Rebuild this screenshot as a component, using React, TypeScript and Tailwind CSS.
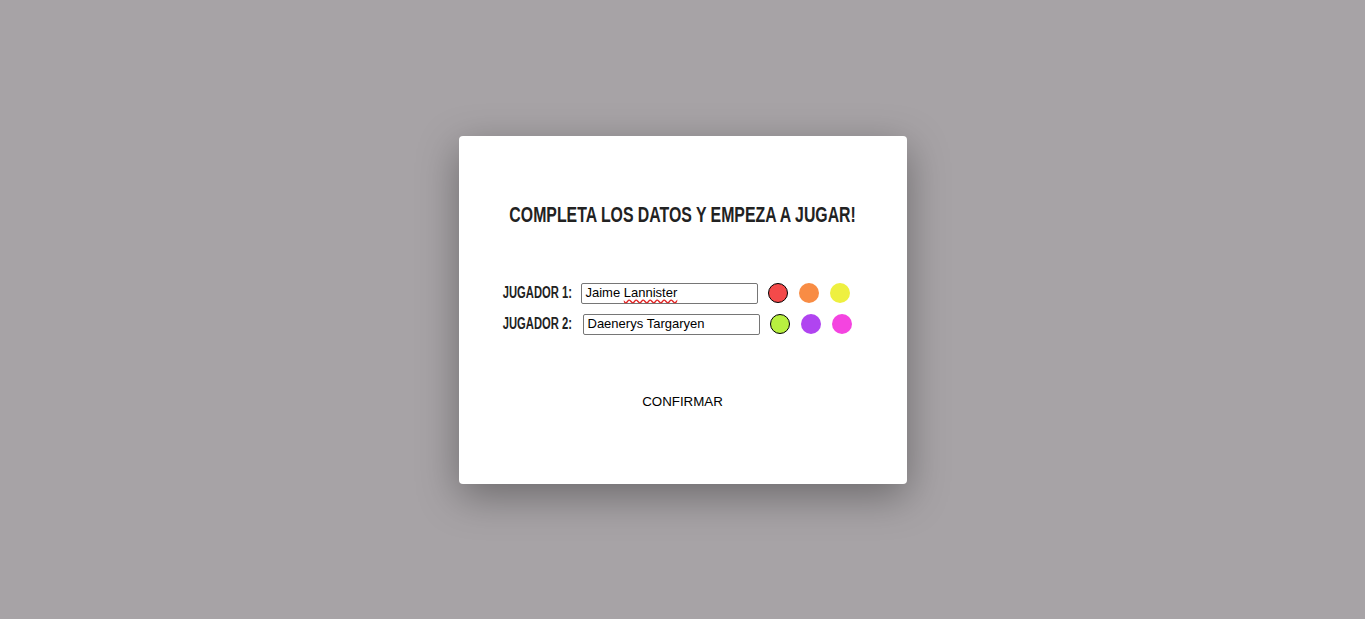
import React from 'react';

const players = [
    { label: 'JUGADOR 1:', labelW: 'w-[66px]', name: 'Jaime', last: 'Lannister', colors: ['#f44a4a', '#f88c44', '#eef040'] },
    { label: 'JUGADOR 2:', labelW: 'w-[70px]', name: 'Daenerys', last: 'Targaryen', colors: ['#b8f040', '#b044f0', '#f444e0'] },
];

export default function App() {
    return (
        <main className="min-h-screen w-full bg-[#a7a3a6] flex items-center justify-center" style={{ minHeight: 619 }}>

            {/* Modal */}
            <div className="w-[448px] h-[348px] bg-white rounded-[4px] shadow-[0_12px_40px_rgba(0,0,0,0.35)] flex flex-col items-center pt-[68px]">

                <h1 className="whitespace-nowrap text-[#222] text-[22px] font-bold leading-none font-['Liberation_Sans',Arial,sans-serif] scale-x-[0.72]">
                    COMPLETA LOS DATOS Y EMPEZA A JUGAR!
                </h1>

                <div className="flex flex-col items-center gap-[10px] mt-[57px]">
                    {players.map((p, i) => (
                        <div key={i} className="flex items-center h-[21px]">
                            <span className={`${p.labelW} flex justify-center mr-[10px]`}>
                                <span className="whitespace-nowrap text-[#222] text-[16px] font-bold leading-none font-['Liberation_Sans',Arial,sans-serif] scale-x-[0.7]">
                                    {p.label}
                                </span>
                            </span>
                            <div className="w-[177px] h-[21px] border border-[#767676] rounded-[2px] px-[4px] flex items-center text-[13px] text-black font-['Liberation_Sans',Arial,sans-serif]">
                                {p.name}&nbsp;
                                <span className={i === 0 ? 'underline decoration-wavy decoration-[#e02020] underline-offset-[1px]' : ''}>{p.last}</span>
                            </div>
                            <div className="flex items-center ml-[10px]">
                                {p.colors.map((c, j) => (
                                    <span
                                        key={j}
                                        className={j === 0 ? 'w-[20px] h-[20px] mr-[11px] rounded-full border border-black' : 'w-[20px] h-[20px] mr-[11px] rounded-full'}
                                        style={{ backgroundColor: c }}
                                    />
                                ))}
                            </div>
                        </div>
                    ))}
                </div>

                <button className="mt-[59px] text-[13.33px] leading-[15px] text-black font-['Liberation_Sans',Arial,sans-serif] bg-transparent">
                    CONFIRMAR
                </button>

            </div>
        </main>
    );
}
